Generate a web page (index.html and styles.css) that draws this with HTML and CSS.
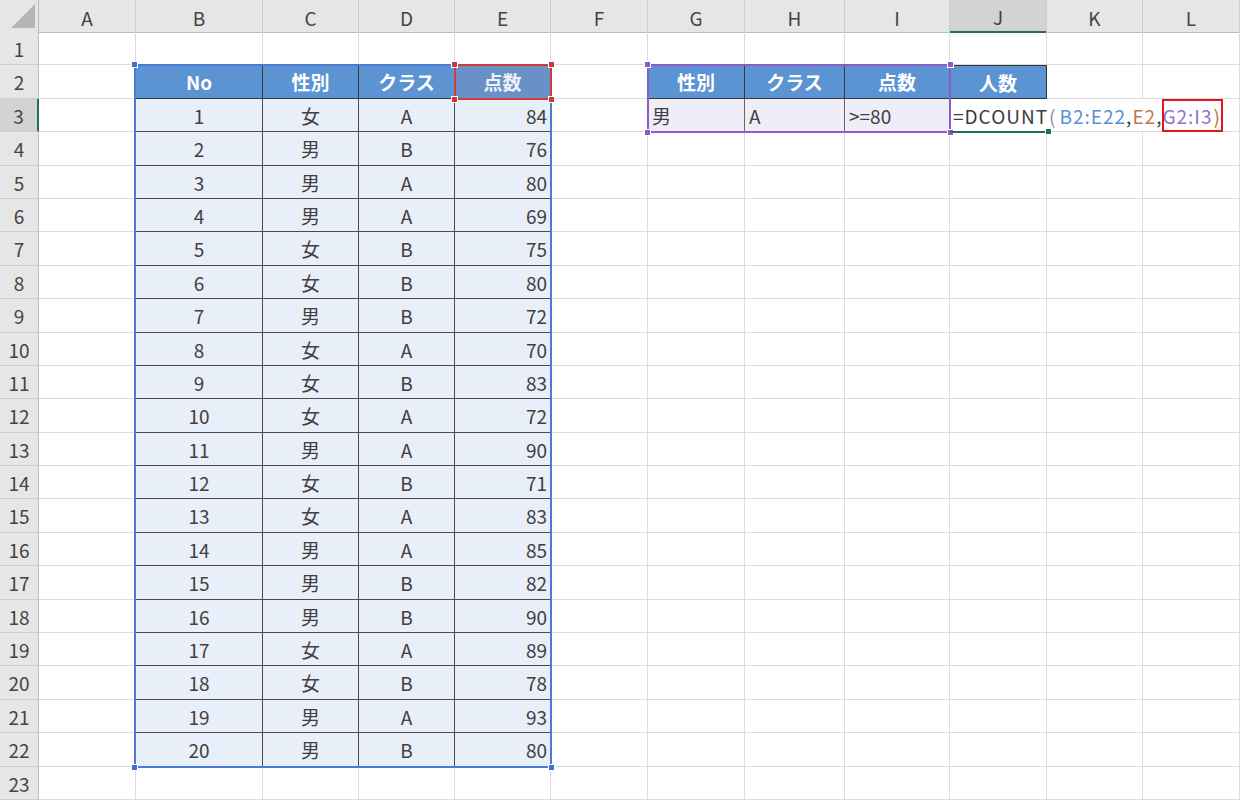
FILE: index.html
```html
<!DOCTYPE html>
<html lang="ja">
<head>
<meta charset="utf-8">
<title>DCOUNT</title>
<link rel="stylesheet" href="styles.css">
</head>
<body>
<div class="sheet">
  <div class="colhead">
    <span class="corner"><svg width="39" height="32" viewBox="0 0 39 32"><polygon points="35,4 35,28 11,28" fill="#b5b5b5"/></svg></span>
    <span>A</span><span>B</span><span>C</span><span>D</span><span>E</span><span>F</span><span>G</span><span>H</span><span>I</span><span class="active">J</span><span>K</span><span>L</span>
  </div>
  <div class="row h33"><span class="rh">1</span><span></span><span></span><span></span><span></span><span></span><span></span><span></span><span></span><span></span><span></span><span></span><span></span></div>
  <div class="row h34"><span class="rh">2</span><span></span><span class="th">No</span><span class="th">性別</span><span class="th">クラス</span><span class="th e2">点数</span><span></span><span class="th">性別</span><span class="th">クラス</span><span class="th">点数</span><span class="th j2">人数</span><span></span><span></span></div>
  <div class="row h33"><span class="rh active">3</span><span></span><span class="td">1</span><span class="td">女</span><span class="td">A</span><span class="td num">84</span><span></span><span class="cr">男</span><span class="cr">A</span><span class="cr">&gt;=80</span><span class="formula">=DCOUNT<span class="par">(</span><span class="f-blue">B2:E22</span>,<span class="f-brown">E2</span>,<span class="f-purple">G2:I3</span><span class="par2">)</span></span><span class="noline"></span><span></span></div>
  <div class="row h34"><span class="rh">4</span><span></span><span class="td">2</span><span class="td">男</span><span class="td">B</span><span class="td num">76</span><span></span><span></span><span></span><span></span><span></span><span></span><span></span></div>
  <div class="row h33"><span class="rh">5</span><span></span><span class="td">3</span><span class="td">男</span><span class="td">A</span><span class="td num">80</span><span></span><span></span><span></span><span></span><span></span><span></span><span></span></div>
  <div class="row h33"><span class="rh">6</span><span></span><span class="td">4</span><span class="td">男</span><span class="td">A</span><span class="td num">69</span><span></span><span></span><span></span><span></span><span></span><span></span><span></span></div>
  <div class="row h34"><span class="rh">7</span><span></span><span class="td">5</span><span class="td">女</span><span class="td">B</span><span class="td num">75</span><span></span><span></span><span></span><span></span><span></span><span></span><span></span></div>
  <div class="row h33"><span class="rh">8</span><span></span><span class="td">6</span><span class="td">女</span><span class="td">B</span><span class="td num">80</span><span></span><span></span><span></span><span></span><span></span><span></span><span></span></div>
  <div class="row h34"><span class="rh">9</span><span></span><span class="td">7</span><span class="td">男</span><span class="td">B</span><span class="td num">72</span><span></span><span></span><span></span><span></span><span></span><span></span><span></span></div>
  <div class="row h33"><span class="rh">10</span><span></span><span class="td">8</span><span class="td">女</span><span class="td">A</span><span class="td num">70</span><span></span><span></span><span></span><span></span><span></span><span></span><span></span></div>
  <div class="row h33"><span class="rh">11</span><span></span><span class="td">9</span><span class="td">女</span><span class="td">B</span><span class="td num">83</span><span></span><span></span><span></span><span></span><span></span><span></span><span></span></div>
  <div class="row h34"><span class="rh">12</span><span></span><span class="td">10</span><span class="td">女</span><span class="td">A</span><span class="td num">72</span><span></span><span></span><span></span><span></span><span></span><span></span><span></span></div>
  <div class="row h33"><span class="rh">13</span><span></span><span class="td">11</span><span class="td">男</span><span class="td">A</span><span class="td num">90</span><span></span><span></span><span></span><span></span><span></span><span></span><span></span></div>
  <div class="row h33"><span class="rh">14</span><span></span><span class="td">12</span><span class="td">女</span><span class="td">B</span><span class="td num">71</span><span></span><span></span><span></span><span></span><span></span><span></span><span></span></div>
  <div class="row h34"><span class="rh">15</span><span></span><span class="td">13</span><span class="td">女</span><span class="td">A</span><span class="td num">83</span><span></span><span></span><span></span><span></span><span></span><span></span><span></span></div>
  <div class="row h33"><span class="rh">16</span><span></span><span class="td">14</span><span class="td">男</span><span class="td">A</span><span class="td num">85</span><span></span><span></span><span></span><span></span><span></span><span></span><span></span></div>
  <div class="row h34"><span class="rh">17</span><span></span><span class="td">15</span><span class="td">男</span><span class="td">B</span><span class="td num">82</span><span></span><span></span><span></span><span></span><span></span><span></span><span></span></div>
  <div class="row h33"><span class="rh">18</span><span></span><span class="td">16</span><span class="td">男</span><span class="td">B</span><span class="td num">90</span><span></span><span></span><span></span><span></span><span></span><span></span><span></span></div>
  <div class="row h33"><span class="rh">19</span><span></span><span class="td">17</span><span class="td">女</span><span class="td">A</span><span class="td num">89</span><span></span><span></span><span></span><span></span><span></span><span></span><span></span></div>
  <div class="row h34"><span class="rh">20</span><span></span><span class="td">18</span><span class="td">女</span><span class="td">B</span><span class="td num">78</span><span></span><span></span><span></span><span></span><span></span><span></span><span></span></div>
  <div class="row h33"><span class="rh">21</span><span></span><span class="td">19</span><span class="td">男</span><span class="td">A</span><span class="td num">93</span><span></span><span></span><span></span><span></span><span></span><span></span><span></span></div>
  <div class="row h34"><span class="rh">22</span><span></span><span class="td">20</span><span class="td">男</span><span class="td">B</span><span class="td num">80</span><span></span><span></span><span></span><span></span><span></span><span></span><span></span></div>
  <div class="row h33"><span class="rh">23</span><span></span><span></span><span></span><span></span><span></span><span></span><span></span><span></span><span></span><span></span><span></span><span></span></div>

  <div class="range range-blue"><i class="hd tl"></i><i class="hd bl"></i><i class="hd br"></i></div>
  <div class="range range-red"><i class="hd tl"></i><i class="hd tr"></i><i class="hd bl"></i><i class="hd br"></i></div>
  <div class="range range-purple"><i class="hd tl"></i><i class="hd tr"></i><i class="hd bl"></i><i class="hd br"></i></div>
  <div class="active-cell"><i class="hd br"></i></div>
  <div class="callout"></div>
</div>
</body>
</html>
```

FILE: styles.css
```css
* { box-sizing: border-box; }
html, body { margin: 0; padding: 0; background: #fff; }
body { font-family: "Noto Sans CJK JP", "Noto Sans", sans-serif; color: #3c3c3c; }

.sheet {
  position: relative;
  width: 1240px;
  height: 800px;
  overflow: hidden;
  background: #fff;
}

.colhead, .row {
  display: grid;
  grid-template-columns: 39px 97px 127px 96px 96px 96px 97px 97px 100px 105px 97px 96px 97px;
}
.colhead { height: 32px; }
.h33 { height: 33px; }
.h34 { height: 34px; }

.colhead > span, .row > span {
  display: flex;
  align-items: center;
  justify-content: center;
  font-size: 19px;
  line-height: 1;
  white-space: nowrap;
  border-right: 1px solid #dcdcdc;
  border-bottom: 1px solid #dcdcdc;
}

.colhead > span {
  background: #e6e6e6;
  color: #444;
  border-right-color: #cdcdcd;
  border-bottom-color: #bdbdbd;
  padding-top: 2px;
}
.colhead > span.corner {
  padding: 0;
  display: block;
  border-right-color: #bdbdbd;
}
.colhead > span.corner svg { display: block; }
.colhead > span.active {
  background: #d3d3d3;
  border-bottom: 2px solid #217346;
}

.row > span.rh {
  background: #e6e6e6;
  color: #444;
  border-right-color: #bdbdbd;
  border-bottom-color: #cdcdcd;
}
.row > span.rh.active {
  background: #d3d3d3;
  border-right: 2px solid #217346;
}

.row > span.th {
  background: #5b93d3;
  color: #fff;
  font-weight: 700;
  border-right-color: #3a3a3a;
  border-bottom-color: #3a3a3a;
}
.row > span.th.e2 { background: #6a91c6; color: #eef2f8; }
.row > span.th.j2 { border: 1px solid #333; border-left: none; }

.row > span.td {
  background: #e9eff8;
  color: #404040;
  border-right-color: #4a4a4a;
  border-bottom-color: #4a4a4a;
}
.row > span.num { justify-content: flex-end; padding-right: 3px; }

.row > span.cr {
  background: #efedf7;
  color: #404040;
  justify-content: flex-start;
  padding-left: 4px;
  border-right-color: #666;
  border-bottom-color: #dcdcdc;
}

.row > span.formula {
  justify-content: flex-start;
  padding-left: 3px;
  color: #3c3c3c;
  letter-spacing: 1px;
  border-right: none;
  overflow: visible;
}
.row > span.noline { border-right: none; }
.par { color: #8a94a8; margin: 0 3px 0 1px; }
.par2 { color: #b37744; margin-left: 1px; }
.f-blue { color: #5a8fd6; }
.f-brown { color: #c0784e; }
.f-purple { color: #8a73c6; }

/* overlays */
.range { position: absolute; pointer-events: none; }
.range-blue {
  left: 134px; top: 64px; width: 418px; height: 704px;
  border: 2px solid #4a7bd0;
}
.range-red {
  left: 454px; top: 64px; width: 98px; height: 36px;
  border: 2px solid #d13a3a;
}
.range-purple {
  left: 647px; top: 64px; width: 304px; height: 69px;
  border: 2px solid #8a5cc8;
}
.active-cell {
  position: absolute;
  left: 951px; top: 131px; width: 96px; height: 2px;
  background: #217346;
}
.hd {
  position: absolute;
  width: 7px; height: 7px;
  background: inherit;
}
.range-blue .hd { background: #3f72cf; border: 1px solid #fff; }
.range-red .hd { background: #c83a3a; border: 1px solid #fff; }
.range-purple .hd { background: #8a5cc8; border: 1px solid #fff; }
.active-cell .hd { background: #217346; border: 1px solid #fff; right: -4px; top: -3px; }
.hd.tl { left: -5px; top: -5px; }
.hd.tr { right: -5px; top: -5px; }
.hd.bl { left: -5px; bottom: -5px; }
.hd.br { right: -5px; bottom: -5px; }

.callout {
  position: absolute;
  left: 1162px; top: 99px; width: 61px; height: 33px;
  border: 2px solid #e8141b;
}
```
